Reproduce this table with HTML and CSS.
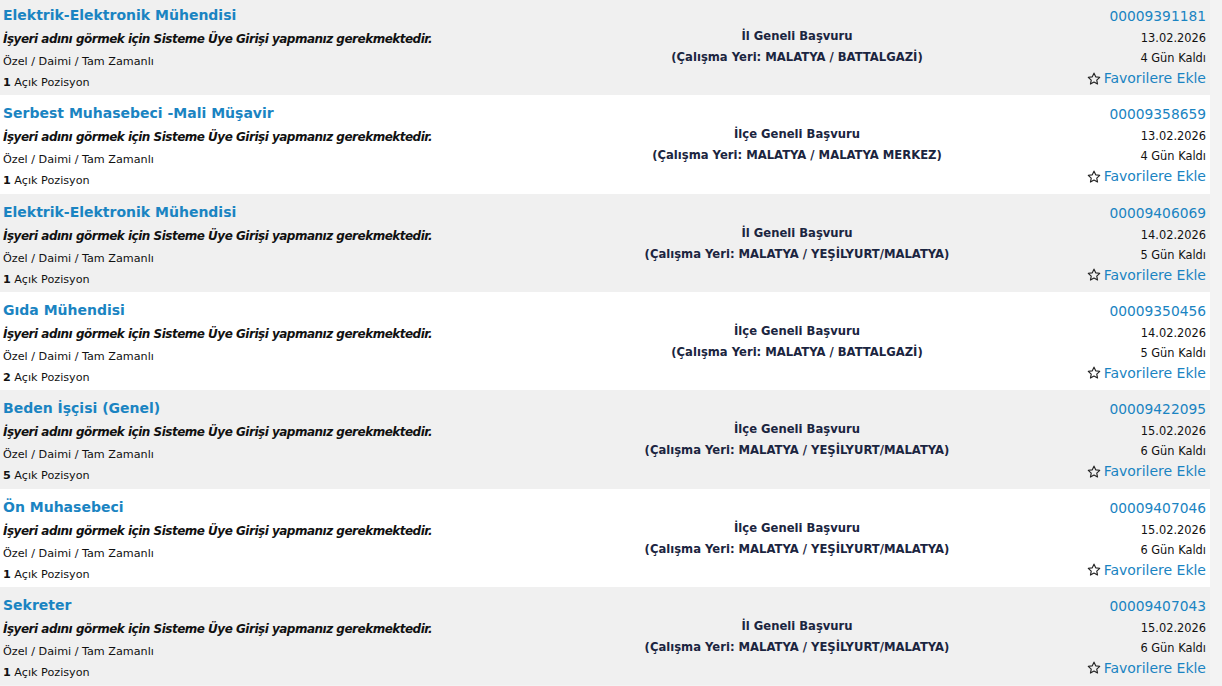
FILE: index.html
```html
<!DOCTYPE html>
<html lang="tr">
<head>
<meta charset="utf-8">
<link rel="stylesheet" href="styles.css">
</head>
<body>
<div class="list">
  <div class="row gray">
    <div class="col-left">
      <a class="title">Elektrik-Elektronik Mühendisi</a>
      <div class="firm">İşyeri adını görmek için Sisteme Üye Girişi yapmanız gerekmektedir.</div>
      <div class="meta">Özel / Daimi / Tam Zamanlı</div>
      <div class="meta"><b>1</b> Açık Pozisyon</div>
    </div>
    <div class="col-mid">
      <div>İl Geneli Başvuru</div>
      <div>(Çalışma Yeri: MALATYA / BATTALGAZİ)</div>
    </div>
    <div class="col-right">
      <a class="num">00009391181</a>
      <div class="small">13.02.2026</div>
      <div class="small">4 Gün Kaldı</div>
      <a class="fav"><svg class="star" viewBox="0 0 16 16"><path d="M8 1.3l1.95 4.2 4.6.55-3.4 3.15.9 4.55L8 11.5l-4.05 2.25.9-4.55L1.45 6.05l4.6-.55z"/></svg>Favorilere Ekle</a>
    </div>
  </div>
  <div class="row white">
    <div class="col-left">
      <a class="title">Serbest Muhasebeci -Mali Müşavir</a>
      <div class="firm">İşyeri adını görmek için Sisteme Üye Girişi yapmanız gerekmektedir.</div>
      <div class="meta">Özel / Daimi / Tam Zamanlı</div>
      <div class="meta"><b>1</b> Açık Pozisyon</div>
    </div>
    <div class="col-mid">
      <div>İlçe Geneli Başvuru</div>
      <div>(Çalışma Yeri: MALATYA / MALATYA MERKEZ)</div>
    </div>
    <div class="col-right">
      <a class="num">00009358659</a>
      <div class="small">13.02.2026</div>
      <div class="small">4 Gün Kaldı</div>
      <a class="fav"><svg class="star" viewBox="0 0 16 16"><path d="M8 1.3l1.95 4.2 4.6.55-3.4 3.15.9 4.55L8 11.5l-4.05 2.25.9-4.55L1.45 6.05l4.6-.55z"/></svg>Favorilere Ekle</a>
    </div>
  </div>
  <div class="row gray">
    <div class="col-left">
      <a class="title">Elektrik-Elektronik Mühendisi</a>
      <div class="firm">İşyeri adını görmek için Sisteme Üye Girişi yapmanız gerekmektedir.</div>
      <div class="meta">Özel / Daimi / Tam Zamanlı</div>
      <div class="meta"><b>1</b> Açık Pozisyon</div>
    </div>
    <div class="col-mid">
      <div>İl Geneli Başvuru</div>
      <div>(Çalışma Yeri: MALATYA / YEŞİLYURT/MALATYA)</div>
    </div>
    <div class="col-right">
      <a class="num">00009406069</a>
      <div class="small">14.02.2026</div>
      <div class="small">5 Gün Kaldı</div>
      <a class="fav"><svg class="star" viewBox="0 0 16 16"><path d="M8 1.3l1.95 4.2 4.6.55-3.4 3.15.9 4.55L8 11.5l-4.05 2.25.9-4.55L1.45 6.05l4.6-.55z"/></svg>Favorilere Ekle</a>
    </div>
  </div>
  <div class="row white">
    <div class="col-left">
      <a class="title">Gıda Mühendisi</a>
      <div class="firm">İşyeri adını görmek için Sisteme Üye Girişi yapmanız gerekmektedir.</div>
      <div class="meta">Özel / Daimi / Tam Zamanlı</div>
      <div class="meta"><b>2</b> Açık Pozisyon</div>
    </div>
    <div class="col-mid">
      <div>İlçe Geneli Başvuru</div>
      <div>(Çalışma Yeri: MALATYA / BATTALGAZİ)</div>
    </div>
    <div class="col-right">
      <a class="num">00009350456</a>
      <div class="small">14.02.2026</div>
      <div class="small">5 Gün Kaldı</div>
      <a class="fav"><svg class="star" viewBox="0 0 16 16"><path d="M8 1.3l1.95 4.2 4.6.55-3.4 3.15.9 4.55L8 11.5l-4.05 2.25.9-4.55L1.45 6.05l4.6-.55z"/></svg>Favorilere Ekle</a>
    </div>
  </div>
  <div class="row gray">
    <div class="col-left">
      <a class="title">Beden İşçisi (Genel)</a>
      <div class="firm">İşyeri adını görmek için Sisteme Üye Girişi yapmanız gerekmektedir.</div>
      <div class="meta">Özel / Daimi / Tam Zamanlı</div>
      <div class="meta"><b>5</b> Açık Pozisyon</div>
    </div>
    <div class="col-mid">
      <div>İlçe Geneli Başvuru</div>
      <div>(Çalışma Yeri: MALATYA / YEŞİLYURT/MALATYA)</div>
    </div>
    <div class="col-right">
      <a class="num">00009422095</a>
      <div class="small">15.02.2026</div>
      <div class="small">6 Gün Kaldı</div>
      <a class="fav"><svg class="star" viewBox="0 0 16 16"><path d="M8 1.3l1.95 4.2 4.6.55-3.4 3.15.9 4.55L8 11.5l-4.05 2.25.9-4.55L1.45 6.05l4.6-.55z"/></svg>Favorilere Ekle</a>
    </div>
  </div>
  <div class="row white">
    <div class="col-left">
      <a class="title">Ön Muhasebeci</a>
      <div class="firm">İşyeri adını görmek için Sisteme Üye Girişi yapmanız gerekmektedir.</div>
      <div class="meta">Özel / Daimi / Tam Zamanlı</div>
      <div class="meta"><b>1</b> Açık Pozisyon</div>
    </div>
    <div class="col-mid">
      <div>İlçe Geneli Başvuru</div>
      <div>(Çalışma Yeri: MALATYA / YEŞİLYURT/MALATYA)</div>
    </div>
    <div class="col-right">
      <a class="num">00009407046</a>
      <div class="small">15.02.2026</div>
      <div class="small">6 Gün Kaldı</div>
      <a class="fav"><svg class="star" viewBox="0 0 16 16"><path d="M8 1.3l1.95 4.2 4.6.55-3.4 3.15.9 4.55L8 11.5l-4.05 2.25.9-4.55L1.45 6.05l4.6-.55z"/></svg>Favorilere Ekle</a>
    </div>
  </div>
  <div class="row gray">
    <div class="col-left">
      <a class="title">Sekreter</a>
      <div class="firm">İşyeri adını görmek için Sisteme Üye Girişi yapmanız gerekmektedir.</div>
      <div class="meta">Özel / Daimi / Tam Zamanlı</div>
      <div class="meta"><b>1</b> Açık Pozisyon</div>
    </div>
    <div class="col-mid">
      <div>İl Geneli Başvuru</div>
      <div>(Çalışma Yeri: MALATYA / YEŞİLYURT/MALATYA)</div>
    </div>
    <div class="col-right">
      <a class="num">00009407043</a>
      <div class="small">15.02.2026</div>
      <div class="small">6 Gün Kaldı</div>
      <a class="fav"><svg class="star" viewBox="0 0 16 16"><path d="M8 1.3l1.95 4.2 4.6.55-3.4 3.15.9 4.55L8 11.5l-4.05 2.25.9-4.55L1.45 6.05l4.6-.55z"/></svg>Favorilere Ekle</a>
    </div>
  </div>
</div>
</body>
</html>
```
FILE: styles.css
```css
html, body {
  margin: 0;
  padding: 0;
}
body {
  background: #f3f3f3;
  font-family: "DejaVu Sans", Verdana, sans-serif;
  color: #111;
  overflow: hidden;
  height: 686px;
}
.list {
  width: 1210px;
  margin-top: -3px;
}
.row {
  display: grid;
  grid-template-columns: 582px 424px 1fr;
  height: 98.33px;
  box-sizing: border-box;
  padding: 6px 4px 0 3px;
}
.row.gray { background: #f0f0f0; }
.row.white { background: #ffffff; }
.col-left, .col-right {
  display: flex;
  flex-direction: column;
}
.title {
  color: #1a84c2;
  font-weight: bold;
  font-size: 14px;
  line-height: 24px;
  height: 24px;
}
.firm {
  font-size: 12px;
  letter-spacing: -0.5px;
  font-weight: bold;
  font-style: italic;
  line-height: 24px;
  color: #111;
}
.meta {
  font-size: 11.2px;
  line-height: 21px;
  color: #111;
}
.col-mid {
  display: flex;
  flex-direction: column;
  align-items: center;
  padding-top: 23px;
  font-size: 11.6px;
  font-weight: bold;
  line-height: 21px;
  color: #1b2540;
}
.col-right {
  align-items: flex-end;
  padding-top: 1px;
}
.num {
  color: #1a84c2;
  font-size: 13.8px;
  line-height: 24px;
}
.small {
  font-size: 11.4px;
  line-height: 20px;
  color: #111;
}
.fav {
  display: flex;
  align-items: center;
  gap: 3px;
  color: #1a84c2;
  font-size: 14px;
  line-height: 21px;
}
.star {
  width: 14px;
  height: 14px;
  fill: none;
  stroke: #222;
  stroke-width: 1.3;
  stroke-linejoin: round;
}
```
